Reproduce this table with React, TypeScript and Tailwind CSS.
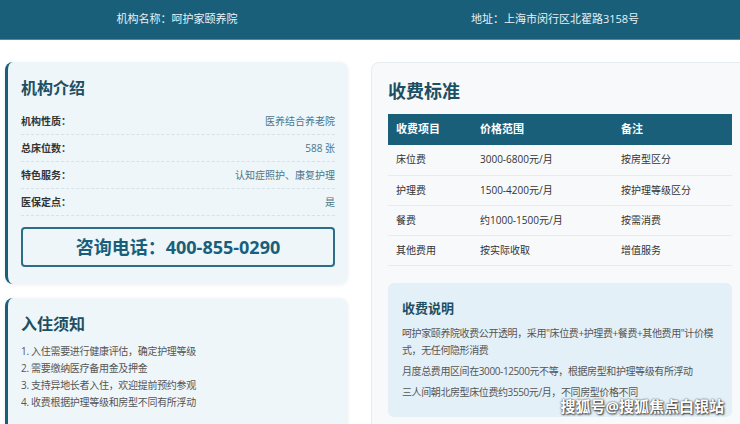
import React from "react";

const FONT = { fontFamily: '"Open Sans", "Noto Sans CJK SC", sans-serif' };

const INFO_ROWS = [
  { label: "机构性质：", value: "医养结合养老院" },
  { label: "总床位数：", value: "588 张" },
  { label: "特色服务：", value: "认知症照护、康复护理" },
  { label: "医保定点：", value: "是" },
];

const FEES = [
  { item: "床位费", price: "3000-6800元/月", note: "按房型区分" },
  { item: "护理费", price: "1500-4200元/月", note: "按护理等级区分" },
  { item: "餐费", price: "约1000-1500元/月", note: "按需消费" },
  { item: "其他费用", price: "按实际收取", note: "增值服务" },
];

const NOTICES = [
  "1. 入住需要进行健康评估，确定护理等级",
  "2. 需要缴纳医疗备用金及押金",
  "3. 支持异地长者入住，欢迎提前预约参观",
  "4. 收费根据护理等级和房型不同有所浮动",
];

export default function App() {
  return (
    <div
      className="relative h-[424px] w-[740px] overflow-hidden bg-white"
      style={FONT}
    >
      <header className="grid h-[40px] grid-cols-2 items-center border-b border-[#4d8aa1] bg-[#1a5f7a] text-center text-[11px] text-[#e8f1f5]">
        <span className="pr-[16px]">机构名称：呵护家颐养院</span>
        <span>地址：上海市闵行区北翟路3158号</span>
      </header>

      <main className="grid grid-cols-[343px_378px] gap-[23px] pl-[5px] pt-[22px]">
        <div className="flex flex-col gap-[14px]">
          <section className="rounded-[8px] border-l-[3px] border-[#1a5f7a] bg-[#eef6fa] px-[13px] pb-[17px] pt-[16px] shadow-[0_1px_4px_rgba(0,0,0,0.06)]">
            <h2 className="mb-[10px] text-[16px] font-bold leading-[20px] text-[#1d4f63]">
              机构介绍
            </h2>
            {INFO_ROWS.map((row) => (
              <div
                key={row.label}
                className="flex h-[27px] items-center justify-between border-b border-dashed border-[#d6e2e8] text-[10px]"
              >
                <span className="font-bold text-[#333]">{row.label}</span>
                <span className="text-[#4b7588]">{row.value}</span>
              </div>
            ))}
            <div className="mt-[11px] flex h-[40px] items-center justify-center rounded-[4px] border-2 border-[#2d6d86] text-[18px] font-bold text-[#1a5f7a]">
              咨询电话：400-855-0290
            </div>
          </section>

          <section className="h-[200px] rounded-[8px] border-l-[3px] border-[#1a5f7a] bg-[#eef6fa] px-[13px] pt-[16px] shadow-[0_1px_4px_rgba(0,0,0,0.06)]">
            <h2 className="mb-[9px] text-[16px] font-bold leading-[20px] text-[#1d4f63]">
              入住须知
            </h2>
            <ul className="text-[10px] leading-[17px] tracking-[-0.3px] text-[#555]">
              {NOTICES.map((n) => (
                <li key={n}>{n}</li>
              ))}
            </ul>
          </section>
        </div>

        <section className="h-[400px] rounded-[8px] border border-[#e6edf1] bg-[#f7f9fb] px-[16px] pt-[16px]">
          <h2 className="mb-[11px] text-[18px] font-bold leading-[24px] text-[#1d4f63]">
            收费标准
          </h2>
          <table className="w-[344px] border-collapse text-left">
            <thead>
              <tr className="h-[31px] bg-[#1a5f7a] text-[11px] font-bold text-white">
                <th className="w-[84px] pl-[8px]">收费项目</th>
                <th className="w-[141px] pl-[8px]">价格范围</th>
                <th className="pl-[8px]">备注</th>
              </tr>
            </thead>
            <tbody className="text-[10px] text-[#333]">
              {FEES.map((f) => (
                <tr key={f.item} className="h-[30px] border-b border-[#e6ebee]">
                  <td className="pl-[8px]">{f.item}</td>
                  <td className="pl-[8px]">{f.price}</td>
                  <td className="pl-[8px]">{f.note}</td>
                </tr>
              ))}
            </tbody>
          </table>

          <div className="mt-[17px] w-[344px] rounded-[6px] bg-[#e4f0f7] pb-[16px] pl-[14px] pr-[8px] pt-[16px]">
            <h3 className="mb-[8px] text-[13px] font-bold leading-[18px] text-[#1d4f63]">
              收费说明
            </h3>
            <div className="flex flex-col gap-[4px] text-[10px] leading-[17px] tracking-[-0.4px] text-[#555]">
              <p>
                <span className="whitespace-nowrap">
                  呵护家颐养院收费公开透明，采用"床位费+护理费+餐费+其他费用"计价模
                </span>
                <br />
                式，无任何隐形消费
              </p>
              <p>月度总费用区间在3000-12500元不等，根据房型和护理等级有所浮动</p>
              <p>三人间朝北房型床位费约3550元/月，不同房型价格不同</p>
            </div>
          </div>
        </section>
      </main>

      <div className="absolute bottom-[7px] right-[16px] text-[15px] font-bold text-white [text-shadow:0_0_2px_#333,1px_1px_2px_#333]">
        搜狐号@搜狐焦点白银站
      </div>
    </div>
  );
}
